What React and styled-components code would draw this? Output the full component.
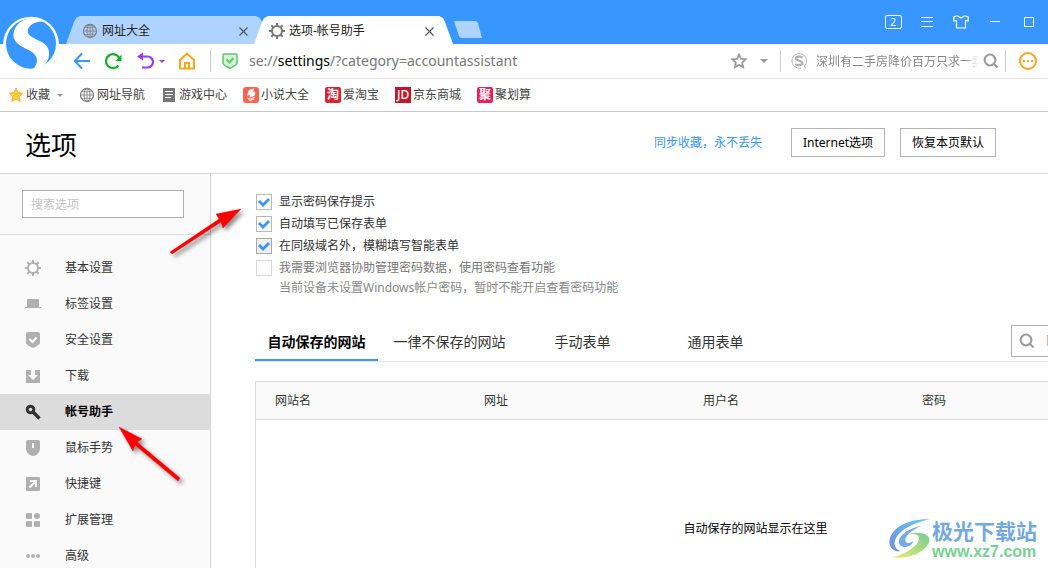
import styled, { createGlobalStyle } from "styled-components";

const GlobalStyle = createGlobalStyle`
  * { box-sizing: border-box; }
  body {
    margin: 0;
    background: #fff;
    color: #333;
    font: 12px/16px "Noto Sans", "Noto Sans CJK SC", sans-serif;
  }
  button, input { font: inherit; color: inherit; }
  button { padding: 0; border: 0; background: none; cursor: pointer; }
  a { color: inherit; text-decoration: none; }
  svg { display: block; flex: none; }
`;

const Browser = styled.div`
  position: relative;
  display: flex;
  flex-direction: column;
  height: 100vh;
  overflow: hidden;
`;

/* title bar */
const TitleBar = styled.header`
  display: flex;
  flex: none;
  align-items: flex-end;
  height: 44px;
  padding: 0 2px 0 66px;
  background: #3797ff;
`;

const Tab = styled.div`
  position: relative;
  z-index: ${(p) => (p.$active ? 1 : 0)};
  display: flex;
  align-items: center;
  gap: 4px;
  width: ${(p) => (p.$active ? "199px" : "204px")};
  height: 28px;
  margin-right: ${(p) => (p.$active ? "0" : "-16px")};
  padding: 2px 17px 0 ${(p) => (p.$active ? "15px" : "16px")};
  background: ${(p) => (p.$active ? "#fff" : "#afd3ff")};
  color: #222;
  clip-path: polygon(0 100%, 8px 6px, 10px 2px, 14px 0, calc(100% - 14px) 0, calc(100% - 10px) 2px, calc(100% - 8px) 6px, 100% 100%);
`;

const TabName = styled.span`
  flex: 1;
  white-space: nowrap;
`;

const NewTab = styled.button`
  width: 28px;
  height: 17px;
  margin: 0 0 6px 1px;
  background: #afd3ff;
  clip-path: polygon(0 0, 22px 0, 24px 2px, 100% 100%, 7px 100%, 5px 15px);
`;

const WindowButtons = styled.div`
  display: flex;
  align-self: center;
  margin-left: auto;
`;

const WindowButton = styled.button`
  display: flex;
  align-items: center;
  justify-content: center;
  width: 34px;
  height: 28px;
  color: #fff;
`;

const WindowCount = styled.span`
  width: 17px;
  height: 14px;
  border: 1px solid #fff;
  border-radius: 2px;
  font-size: 10px;
  line-height: 12px;
`;

const Logo = styled.svg`
  position: absolute;
  top: 12px;
  left: 0;
  z-index: 2;
`;

/* address bar */
const AddressBar = styled.div`
  display: flex;
  flex: none;
  align-items: center;
  height: 35px;
  padding: 0 11px 0 73px;
  border-bottom: 1px solid #e0e0e0;
`;

const IconButton = styled.button`
  display: flex;
  align-items: center;
  justify-content: center;
  flex: none;
  width: ${(p) => p.$w || 18}px;
  height: 24px;
  margin-right: ${(p) => p.$gap || 0}px;
`;

const Divider = styled.i`
  flex: none;
  width: 1px;
  height: 22px;
  margin-right: ${(p) => p.$gap}px;
  background: #ccc;
`;

const Url = styled.div`
  flex: 1;
  padding: 0 11px;
  font-size: 14px;
  line-height: 20px;
  color: #777;
  white-space: nowrap;
  overflow: hidden;
  outline: 0;
  b { font-weight: 400; color: #000; }
`;

const WebSearch = styled.input`
  flex: none;
  width: 163px;
  height: 22px;
  margin: 0 4px 0 9px;
  padding: 0;
  border: 0;
  outline: 0;
  mask-image: linear-gradient(to right, #000 150px, transparent);
  &::placeholder { color: #888; opacity: 1; }
`;

/* bookmarks */
const Bookmarks = styled.nav`
  display: flex;
  flex: none;
  align-items: center;
  gap: 16px;
  height: 33px;
  padding-left: 8px;
  border-bottom: 1px solid #c8c8c8;
`;

const Bookmark = styled.a`
  display: flex;
  align-items: center;
  gap: 2px;
  white-space: nowrap;
  color: #444;
`;

const BookmarkCaret = styled.span`
  padding-left: 5px;
`;

const Badge = styled.span`
  width: 16px;
  height: 16px;
  border-radius: ${(p) => p.$radius || 0}px;
  background: ${(p) => p.$color};
  color: #fff;
  font-size: 12px;
  font-weight: ${(p) => p.$weight || 500};
  line-height: 15px;
  text-align: center;
`;

/* settings page */
const PageHead = styled.div`
  display: flex;
  flex: none;
  align-items: center;
  height: 62px;
  padding: 0 52px 0 25px;
  border-bottom: 1px solid #d4d4d4;
`;

const Title = styled.h1`
  flex: 1;
  margin: 0;
  padding-top: 4px;
  font-size: 26px;
  font-weight: 400;
  line-height: 36px;
  color: #000;
`;

const SyncLink = styled.a`
  margin-right: 14px;
  color: #3797ff;
`;

const PlainButton = styled.button`
  height: 29px;
  margin-left: 15px;
  padding: 1px 11px 0;
  border: 1px solid #b4b4b4;
  background: #fff;
  color: #000;
  white-space: nowrap;
`;

const Body = styled.div`
  display: flex;
  flex: 1;
  min-height: 0;
`;

const Sidebar = styled.aside`
  flex: none;
  width: 211px;
  border-right: 1px solid #d4d4d4;
  background: #fafafa;
  overflow: hidden;
`;

const SidebarSearch = styled.div`
  padding: 16px 26px 16px 22px;
  border-bottom: 1px solid #dcdcdc;
  input {
    display: block;
    width: 100%;
    height: 28px;
    padding: 0 8px;
    border: 1px solid #b0b0b0;
    background: #fff;
    outline: 0;
  }
  input::placeholder { color: #c4c4c4; opacity: 1; }
`;

const Nav = styled.nav`
  padding-top: 15px;
`;

const NavItem = styled.a`
  display: flex;
  align-items: center;
  gap: 24px;
  height: 36px;
  padding-left: 25px;
  background: ${(p) => (p.$active ? "#dcdcdc" : "transparent")};
  color: ${(p) => (p.$active ? "#000" : "#333")};
  font-weight: ${(p) => (p.$active ? 700 : 400)};
  svg { color: ${(p) => (p.$active ? "#333" : "#b0b0b0")}; }
`;

const Main = styled.main`
  flex: 1;
  min-width: 0;
  padding: 20px 0 0 44px;
  overflow: hidden;
`;

const Options = styled.div`
  display: flex;
  flex-direction: column;
  align-items: flex-start;
  gap: 6px;
  padding-left: 1px;
`;

const Option = styled.label`
  display: flex;
  align-items: center;
  gap: 7px;
  height: 16px;
  line-height: 18px;
  color: ${(p) => (p.$disabled ? "#777" : "#333")};
`;

const Checkbox = styled.input`
  appearance: none;
  width: 16px;
  height: 16px;
  margin: 0;
  border: 1px solid ${(p) => (p.$hover ? "#a8a8a8" : "#b8b8b8")};
  background: ${(p) => (p.$hover ? "#eee" : "#fff")};
  &:disabled { border-color: #d6d6d6; }
  &:checked::after {
    content: "";
    display: block;
    width: 14px;
    height: 14px;
    background: #3797ff;
    clip-path: polygon(1px 7px, 3px 5px, 6px 8px, 11px 3px, 13px 5px, 6px 12px);
  }
`;

const Note = styled.p`
  margin: 4px 0 0 24px;
  color: #888;
`;

const Tabs = styled.div`
  display: flex;
  gap: 10px;
  width: 1001px;
  margin-top: 28px;
  border-bottom: 1px solid #e8e8e8;
`;

const FormTab = styled.button`
  width: 123px;
  height: 37px;
  border-bottom: 2px solid ${(p) => (p.$active ? "#3797ff" : "transparent")};
  color: ${(p) => (p.$active ? "#000" : "#333")};
  font-size: 14px;
  font-weight: ${(p) => (p.$active ? 700 : 400)};
  white-space: nowrap;
`;

const SiteSearch = styled.label`
  display: flex;
  align-items: center;
  gap: 11px;
  width: 245px;
  height: 32px;
  margin: 1px 0 0 auto;
  padding: 0 7px;
  border: 1px solid #b0b0b0;
  input { flex: 1; min-width: 0; padding: 0; border: 0; outline: 0; }
  input::placeholder { color: #aaa; opacity: 1; }
`;

const Sites = styled.table`
  width: 1001px;
  margin-top: 19px;
  border: 1px solid #dcdcdc;
  border-spacing: 0;
  table-layout: fixed;
  th {
    width: 219px;
    height: 38px;
    padding: 0 0 0 19px;
    border-bottom: 1px solid #dcdcdc;
    background: #fafafa;
    font-weight: 400;
    text-align: left;
  }
  th:first-child { width: 209px; }
  th:last-child { width: auto; }
  td { height: 218px; padding: 0; text-align: center; color: #000; }
`;

const Arrow = styled.svg`
  position: absolute;
  top: ${(p) => p.$top}px;
  left: ${(p) => p.$left}px;
  z-index: 3;
  pointer-events: none;
  filter: drop-shadow(3px 3px 2px rgba(0, 0, 0, 0.45));
`;

const Watermark = styled.div`
  position: absolute;
  right: 11px;
  bottom: 7px;
  display: flex;
  align-items: center;
`;

const WatermarkText = styled.div`
  display: flex;
  flex-direction: column;
  color: #78d196;
  font: 700 16px/18px "Liberation Sans", sans-serif;
  strong {
    color: #74a9de;
    font: 700 21px/26px "Noto Sans CJK SC", sans-serif;
  }
`;

const Globe = () => (
  <svg width="16" height="16" viewBox="0 0 16 16" fill="none" stroke="#808080">
    <circle cx="8" cy="8" r="6.5" strokeWidth="1.3" />
    <ellipse cx="8" cy="8" rx="3" ry="6.5" />
    <path d="M8 1.500v13M1.500 8h13M3 4q5 2 10 0M3 12q5-2 10 0" strokeWidth=".8" />
  </svg>
);

const Gear = ({ color = "currentColor" }) => (
  <svg width="16" height="16" viewBox="0 0 16 16" fill="none" stroke={color}>
    <circle cx="8" cy="8" r="5" strokeWidth="2" />
    <path d="M8 0v3M8 13v3M0 8h3M13 8h3M2.3 2.3l2.2 2.2M11.5 11.5l2.2 2.2M13.7 2.3l-2.2 2.2M4.5 11.5l-2.2 2.2" strokeWidth="2" />
  </svg>
);

const Close = () => (
  <svg width="9" height="9" viewBox="0 0 9 9" stroke="#555" strokeWidth="1.2">
    <path d="M.5.5l8 8M8.5.5l-8 8" />
  </svg>
);

const Caret = ({ size, color }) => (
  <svg width={size} height={size / 2} viewBox="0 0 8 4" fill={color}>
    <path d="M0 0h8L4 4z" />
  </svg>
);

const Magnifier = () => (
  <svg width="16" height="16" viewBox="0 0 16 16" fill="none" stroke="#999" strokeWidth="2">
    <circle cx="7" cy="7" r="5.4" />
    <path d="M11 11l3.5 3.5" />
  </svg>
);

const menu = [
  { name: "基本设置", icon: <Gear /> },
  {
    name: "标签设置",
    icon: (
      <svg width="16" height="16" viewBox="0 0 16 16" fill="currentColor">
        <path d="M2 4q0-1 1-1h10q1 0 1 1v7h2v1H0v-1h2z" />
      </svg>
    ),
  },
  {
    name: "安全设置",
    icon: (
      <svg width="16" height="16" viewBox="0 0 16 16">
        <path d="M1 2Q1 0 3 0h10q2 0 2 2v9q0 2-7 5-7-3-7-5z" fill="currentColor" />
        <path d="M4.500 7l3 3 4-4.500" fill="none" stroke="#fff" strokeWidth="2" />
      </svg>
    ),
  },
  {
    name: "下载",
    icon: (
      <svg width="16" height="16" viewBox="0 0 16 16">
        <path d="M1 2h14v13H1z" fill="currentColor" />
        <path d="M6 1h4v6h3l-5 5-5-5h3z" fill="#fafafa" />
      </svg>
    ),
  },
  {
    name: "帐号助手",
    active: true,
    icon: (
      <svg width="16" height="16" viewBox="0 0 16 16" fill="none" stroke="currentColor">
        <circle cx="5.5" cy="5.5" r="3.3" strokeWidth="3" />
        <path d="M8 8l6.500 6.500M10.500 12l2-2" strokeWidth="3.4" />
      </svg>
    ),
  },
  {
    name: "鼠标手势",
    icon: (
      <svg width="16" height="16" viewBox="0 0 16 16">
        <path d="M1 2Q1 0 3 0h10q2 0 2 2v6c0 4-3 8-7 8S1 12 1 8z" fill="currentColor" />
        <path d="M8 3v5" stroke="#fff" strokeWidth="2" />
      </svg>
    ),
  },
  {
    name: "快捷键",
    icon: (
      <svg width="16" height="16" viewBox="0 0 16 16">
        <rect x="1" y="1" width="14" height="14" rx="1" fill="currentColor" />
        <path d="M5 5h6v6M11 5l-6.500 6.500" fill="none" stroke="#fff" strokeWidth="2" />
      </svg>
    ),
  },
  {
    name: "扩展管理",
    icon: (
      <svg width="16" height="16" viewBox="0 0 16 16" fill="currentColor">
        <rect x="1" y="1" width="6" height="6" rx="1" />
        <circle cx="12" cy="4" r="3" />
        <rect x="1" y="9" width="6" height="6" rx="1" />
        <rect x="9" y="9" width="6" height="6" rx="1" />
      </svg>
    ),
  },
  {
    name: "高级",
    icon: (
      <svg width="16" height="16" viewBox="0 0 16 16" fill="currentColor">
        <circle cx="3" cy="8" r="2" />
        <circle cx="8" cy="8" r="2" />
        <circle cx="13" cy="8" r="2" />
      </svg>
    ),
  },
];

const options = [
  { text: "显示密码保存提示", checked: true },
  { text: "自动填写已保存表单", checked: true },
  { text: "在同级域名外，模糊填写智能表单", checked: true, hover: true },
  { text: "我需要浏览器协助管理密码数据，使用密码查看功能", disabled: true },
];

const formTabs = ["自动保存的网站", "一律不保存的网站", "手动表单", "通用表单"];

const App = () => {
  return (
    <Browser>
      <GlobalStyle />

      <TitleBar>
        <Tab>
          <Globe />
          <TabName>网址大全</TabName>
          <IconButton aria-label="关闭" $w={20}><Close /></IconButton>
        </Tab>
        <Tab $active>
          <Gear color="#777" />
          <TabName>选项-帐号助手</TabName>
          <IconButton aria-label="关闭" $w={14}><Close /></IconButton>
        </Tab>
        <NewTab aria-label="新标签" />
        <WindowButtons>
          <WindowButton><WindowCount>2</WindowCount></WindowButton>
          <WindowButton aria-label="菜单">
            <svg width="12" height="10" viewBox="0 0 12 10" stroke="#fff">
              <path d="M0 .5h12M0 4.500h12M0 9.500h12" />
            </svg>
          </WindowButton>
          <WindowButton aria-label="皮肤">
            <svg width="16" height="14" viewBox="0 0 16 14" fill="none" stroke="#fff" strokeWidth="1.2">
              <path d="M5.500 1.500L4 .8.800 2v4l2.700-.5v7.500h9V5.500l2.700.5V2L12 .8l-1.500.7q-2.500 2.500-5 0z" />
            </svg>
          </WindowButton>
          <WindowButton aria-label="最小化">
            <svg width="10" height="10" viewBox="0 0 10 10" stroke="#fff"><path d="M0 4.500h10" /></svg>
          </WindowButton>
          <WindowButton aria-label="最大化">
            <svg width="10" height="10" viewBox="0 0 10 10" fill="none" stroke="#fff">
              <rect x=".5" y=".5" width="9" height="9" />
            </svg>
          </WindowButton>
        </WindowButtons>
      </TitleBar>

      <Logo width="64" height="62" viewBox="0 0 192 186">
        <circle cx="93" cy="98" r="84" fill="#fff" />
        <circle cx="93" cy="95" r="75" fill="#3797ff" />
        <path d="M132 26C98 8 52 22 42 58C34 90 60 102 86 114C116 130 118 150 98 174L122 170C146 150 152 130 144 108C134 86 102 84 87 68C76 52 90 30 132 28Z" fill="#fff" />
      </Logo>

      <AddressBar>
        <IconButton aria-label="后退" $gap={13}>
          <svg width="18" height="18" viewBox="0 0 18 18" fill="none" stroke="#3797ff" strokeWidth="2">
            <path d="M17 9H2M9 1.500L1.800 9 9 16.500" />
          </svg>
        </IconButton>
        <IconButton aria-label="刷新" $gap={14}>
          <svg width="18" height="18" viewBox="0 0 18 18" fill="none">
            <path d="M14.500 13.500A7 7 0 1 1 15.200 6" stroke="#0db322" strokeWidth="2.2" />
            <path d="M17.500 2.500v6.500h-6z" fill="#0db322" />
          </svg>
        </IconButton>
        <IconButton aria-label="恢复" $gap={5}>
          <svg width="18" height="18" viewBox="0 0 18 18" fill="none">
            <path d="M5 4.500h6.500a5.500 5.500 0 0 1 0 11H6" stroke="#9b3cf5" strokeWidth="2.2" />
            <path d="M1 4.500L7 .5v8z" fill="#9b3cf5" />
          </svg>
        </IconButton>
        <IconButton aria-label="更多" $w={6} $gap={13}><Caret size={6} color="#9b3cf5" /></IconButton>
        <IconButton aria-label="主页" $gap={14}>
          <svg width="18" height="18" viewBox="0 0 18 18" fill="none" stroke="#ffa618" strokeWidth="2">
            <path d="M2 8v8.500h14V8L9 1.500zM7 16v-5h4v5" />
          </svg>
        </IconButton>
        <Divider $gap={11} />
        <svg width="16" height="16" viewBox="0 0 16 16" fill="none" stroke="#62c66f">
          <path d="M1 2Q1 1 2 1h12q1 0 1 1v8q0 2-7 5.200Q1 12 1 10z" fill="#d5f3d8" strokeWidth="1.5" />
          <path d="M4.500 6.500l3 3 4-4.500" strokeWidth="2" />
        </svg>
        <Url contentEditable suppressContentEditableWarning role="textbox" aria-label="地址">
          se://<b>settings</b>/?category=accountassistant
        </Url>
        <IconButton aria-label="收藏" $w={16} $gap={13}>
          <svg width="16" height="16" viewBox="0 0 16 16" fill="none" stroke="#999" strokeWidth="1.8">
            <path d="M8 1.500l1.900 4.300 4.700.5-3.500 3.200 1 4.600L8 11.700l-4.100 2.400 1-4.600L1.400 6.300l4.700-.5z" />
          </svg>
        </IconButton>
        <IconButton aria-label="收藏菜单" $w={8} $gap={12}><Caret size={8} color="#999" /></IconButton>
        <Divider $gap={10} />
        <svg width="16" height="16" viewBox="0 0 16 16" fill="none" stroke="#b4b4b4">
          <path d="M13.500 13A7.300 7.300 0 1 0 10 15M13.500 13l1 2" />
          <path d="M11.500 4.500C9 3 5 3.500 5 5.500S11.500 8 11.500 10 7 13 4 11.200" strokeWidth="2.4" />
        </svg>
        <WebSearch aria-label="搜索" placeholder="深圳有二手房降价百万只求一卖" />
        <IconButton aria-label="搜索" $w={16} $gap={6}><Magnifier /></IconButton>
        <Divider $gap={13} />
        <IconButton aria-label="扩展">
          <svg width="18" height="18" viewBox="0 0 18 18" fill="#ffa618">
            <circle cx="9" cy="9" r="8" fill="none" stroke="#ffa618" strokeWidth="2" />
            <path d="M4 8h2v2H4zM8 8h2v2H8zM12 8h2v2h-2z" />
          </svg>
        </IconButton>
      </AddressBar>

      <Bookmarks>
        <Bookmark href="#fav">
          <svg width="16" height="16" viewBox="0 0 16 16" fill="#fbcb3d" stroke="#e8a52a" strokeWidth=".7">
            <path d="M8 1l2.100 4.600 5 .6-3.700 3.400 1 5L8 12.200l-4.400 2.400 1-5L.9 6.200l5-.6z" />
          </svg>
          收藏
          <BookmarkCaret><Caret size={6} color="#999" /></BookmarkCaret>
        </Bookmark>
        <Bookmark href="#daohang"><Globe />网址导航</Bookmark>
        <Bookmark href="#youxi">
          <svg width="16" height="16" viewBox="0 0 16 16">
            <rect x="2" y="1" width="12" height="14" fill="#777" />
            <path d="M4 4.500h8M4 7.500h8M4 10.500h6" stroke="#fff" />
          </svg>
          游戏中心
        </Bookmark>
        <Bookmark href="#xiaoshuo">
          <svg width="16" height="16" viewBox="0 0 16 16">
            <rect width="16" height="16" rx="3" fill="#f96450" />
            <path d="M6 3l5-1.500L10.500 5l2 .5-1 3.500-5 1.500L7 8 4 8.500z" fill="#fff" />
            <path d="M3.500 10l3.500 1.500 5-2-1 3-4 2z" fill="#fdd0c8" />
          </svg>
          小说大全
        </Bookmark>
        <Bookmark href="#taobao"><Badge $color="#dd2231" $radius={2} $weight={700}>淘</Badge>爱淘宝</Bookmark>
        <Bookmark href="#jd"><Badge $color="#c6162a">JD</Badge>京东商城</Bookmark>
        <Bookmark href="#ju"><Badge $color="#ee1f5a" $radius={2} $weight={700}>聚</Badge>聚划算</Bookmark>
      </Bookmarks>

      <PageHead>
        <Title>选项</Title>
        <SyncLink href="#sync">同步收藏，永不丢失</SyncLink>
        <PlainButton>Internet选项</PlainButton>
        <PlainButton>恢复本页默认</PlainButton>
      </PageHead>

      <Body>
        <Sidebar>
          <SidebarSearch>
            <input aria-label="搜索选项" placeholder="搜索选项" />
          </SidebarSearch>
          <Nav>
            {menu.map((item) => (
              <NavItem key={item.name} href={`#${item.name}`} $active={item.active}>
                {item.icon}
                {item.name}
              </NavItem>
            ))}
          </Nav>
        </Sidebar>

        <Main>
          <Options>
            {options.map((o) => (
              <Option key={o.text} $disabled={o.disabled}>
                <Checkbox type="checkbox" defaultChecked={o.checked} disabled={o.disabled} $hover={o.hover} />
                {o.text}
              </Option>
            ))}
          </Options>
          <Note>当前设备未设置Windows帐户密码，暂时不能开启查看密码功能</Note>

          <Tabs>
            {formTabs.map((name, i) => (
              <FormTab key={name} $active={i === 0}>{name}</FormTab>
            ))}
            <SiteSearch>
              <Magnifier />
              <input aria-label="网站搜索" placeholder="网站搜索" />
            </SiteSearch>
          </Tabs>

          <Sites>
            <thead>
              <tr>
                <th>网站名</th>
                <th>网址</th>
                <th>用户名</th>
                <th>密码</th>
              </tr>
            </thead>
            <tbody>
              <tr>
                <td colSpan={4}>自动保存的网站显示在这里</td>
              </tr>
            </tbody>
          </Sites>
        </Main>
      </Body>

      <Arrow $top={206} $left={168} width="76" height="50" viewBox="0 0 76 50" fill="#f00" stroke="#e00" strokeWidth=".4">
        <path d="M73 3L55 22l-2-6L4 48l-2-2L51 13l-3-5z" />
      </Arrow>
      <Arrow $top={425} $left={117} width="66" height="58" viewBox="0 0 66 58" fill="#f00" stroke="#e00" strokeWidth=".4">
        <path d="M2 2l23 12-5 3 43 36-2 3-43-36-2 6z" />
      </Arrow>

      <Watermark>
        <svg width="44" height="42" viewBox="0 0 132 126">
          <defs>
            <linearGradient id="swirlBlue" x1="0" y1="1" x2="1" y2="0">
              <stop offset="0" stopColor="#6f90d8" />
              <stop offset="1" stopColor="#62c8f2" />
            </linearGradient>
            <linearGradient id="swirlGreen" x1="0" y1="1" x2="1" y2="0">
              <stop offset="0" stopColor="#eef06a" />
              <stop offset="1" stopColor="#6ccb96" />
            </linearGradient>
          </defs>
          <path d="M126 4C70 0 6 26 4 72c0 16 14 30 32 28C20 90 14 76 26 56 42 32 80 14 126 4z" fill="url(#swirlBlue)" />
          <path d="M100 24C56 32 26 58 34 78c8 16 36 10 42-8-12 8-22 6-24-2-2-14 20-32 48-44z" fill="#78aae2" />
          <path d="M60 50c26-6 40 4 30 22-14 22-44 38-78 46 50 8 106-18 112-50 2-22-34-30-64-18z" fill="url(#swirlGreen)" />
        </svg>
        <WatermarkText>
          <strong>极光下载站</strong>
          www.xz7.com
        </WatermarkText>
      </Watermark>
    </Browser>
  );
};

export default App;
